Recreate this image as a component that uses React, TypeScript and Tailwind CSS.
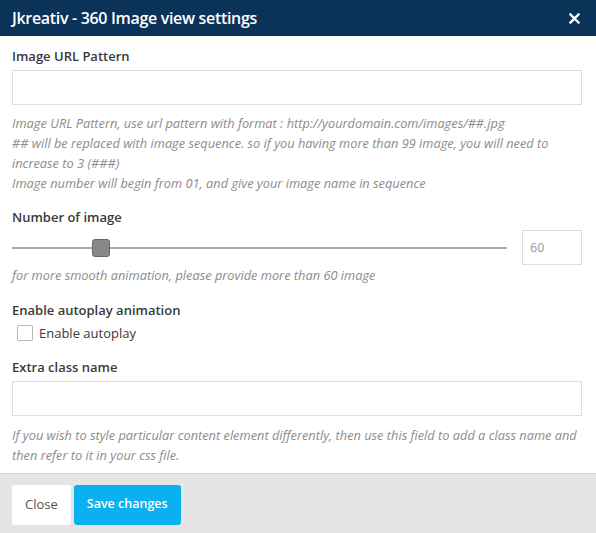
import { useState } from 'react';

export default function App() {
  const [autoplay, setAutoplay] = useState(false);
  const [count] = useState(60);

  return (
    <div className="w-[596px] h-[533px] bg-white flex flex-col font-['Open_Sans',sans-serif] text-[#3a3a3a]">
      {/* Header */}
      <div className="h-[36px] shrink-0 bg-[#0b3358] flex items-center justify-between pl-[12px] pr-[16px]">
        <h1 className="text-white text-[16px] font-semibold tracking-[-0.32px]">Jkreativ - 360 Image view settings</h1>
        <button className="text-white">
          <svg width="11" height="11" viewBox="0 0 11 11">
            <path d="M1.5 1.5 L9.5 9.5 M9.5 1.5 L1.5 9.5" stroke="white" strokeWidth="2.4" strokeLinecap="square" />
          </svg>
        </button>
      </div>

      {/* Body */}
      <div className="flex-1 pl-[12px] pr-[14px] pt-[11px]">
        <div>
          <label className="block text-[13px] font-semibold leading-[18px]">Image URL Pattern</label>
          <input className="mt-[5px] block w-full h-[35px] border border-[#ddd] px-[8px] text-[12px] outline-none" />
          <p className="mt-[8px] text-[12.8px] italic text-[#8c8c8c] leading-[20px]">
            Image URL Pattern, use url pattern with format : http://yourdomain.com/images/##.jpg
            <br />
            ## will be replaced with image sequence. so if you having more than 99 image, you will need to increase to 3 (###)
            <br />
            Image number will begin from 01, and give your image name in sequence
          </p>
        </div>

        <div className="mt-[15px]">
          <label className="block text-[13px] font-semibold leading-[18px]">Number of image</label>
          <div className="mt-[4px] flex items-center gap-[15px]">
            <div className="relative flex-1 h-[2px] bg-[#aaa]">
              <div className="absolute left-[80px] top-[-8px] w-[18px] h-[18px] rounded-[3px] bg-[#888] border border-[#666]" />
            </div>
            <input
              readOnly
              value={count}
              className="w-[60px] h-[35px] border border-[#ddd] px-[7px] text-[12.5px] text-[#999] outline-none"
            />
          </div>
          <p className="mt-0 text-[12.8px] italic text-[#8c8c8c] leading-[20px]">
            for more smooth animation, please provide more than 60 image
          </p>
        </div>

        <div className="mt-[16px]">
          <label className="block text-[13px] font-semibold leading-[18px]">Enable autoplay animation</label>
          <label className="mt-[5px] ml-[5px] flex items-center gap-[6px] text-[13px] leading-[18px]">
            <span
              onClick={() => setAutoplay(!autoplay)}
              className="w-[16px] h-[16px] border border-[#bbb] bg-white rounded-[1px] inline-block"
            />
            Enable autoplay
          </label>
        </div>

        <div className="mt-[16px]">
          <label className="block text-[13px] font-semibold leading-[18px]">Extra class name</label>
          <input className="mt-[5px] block w-full h-[35px] border border-[#ddd] px-[8px] text-[12px] outline-none" />
          <p className="mt-[9px] text-[12.8px] italic text-[#8c8c8c] leading-[20px]">
            If you wish to style particular content element differently, then use this field to add a class name and then refer to it in your css file.
          </p>
        </div>
      </div>

      {/* Footer */}
      <div className="h-[60px] shrink-0 bg-[#e5e5e5] border-t border-[#d8d8d8] flex items-center gap-[3px] px-[12px] pt-[2px]">
        <button className="h-[40px] px-[13px] bg-white rounded-[3px] text-[13px] text-[#555]">Close</button>
        <button className="h-[40px] px-[13px] bg-[#0ab0ef] rounded-[3px] text-[12.5px] font-semibold text-white">Save changes</button>
      </div>
    </div>
  );
}
